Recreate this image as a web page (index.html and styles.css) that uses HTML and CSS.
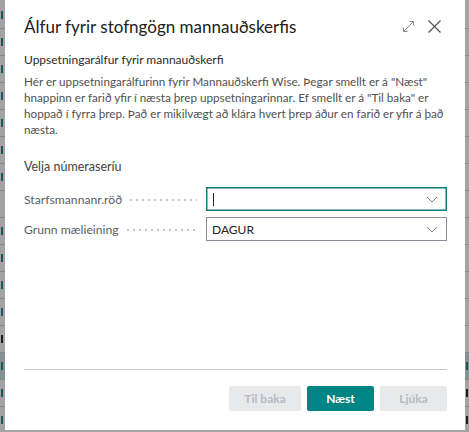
FILE: index.html
```html
<!DOCTYPE html>
<html lang="is">
<head>
    <meta charset="UTF-8">
    <title>Álfur fyrir stofngögn mannauðskerfis</title>
    <link rel="stylesheet" href="styles.css">
</head>
<body>
<div class="page">
    <!-- brot af listanum fyrir aftan gluggann -->
    <ul class="strip left">
        <li><i></i></li>
        <li><i></i></li>
        <li><i></i></li>
        <li><i></i></li>
        <li><i></i></li>
        <li><i></i></li>
        <li><i></i></li>
        <li></li>
        <li><i></i></li>
        <li><i></i></li>
        <li><i></i></li>
        <li><i></i></li>
        <li class="dark"><i></i></li>
        <li class="sel"><i></i></li>
        <li><i></i></li>
        <li><i></i></li>
    </ul>
    <ul class="strip right">
        <li></li>
        <li></li>
        <li></li>
        <li></li>
        <li></li>
        <li></li>
        <li></li>
        <li></li>
        <li></li>
        <li></li>
        <li></li>
        <li></li>
        <li></li>
        <li class="sel"><i></i></li>
        <li class="dark"><i></i></li>
        <li class="dark"><i></i></li>
    </ul>
</div>
<div class="backdrop"></div>

<div class="dialog">
    <div class="head">
        <h1>Álfur fyrir stofngögn mannauðskerfis</h1>
        <div class="tools">
            <!-- stækka -->
            <svg width="13" height="13" viewBox="0 0 13 13" fill="none" stroke="#8c8c8c" stroke-width="1">
                <path d="M1.5 11.5 L11.5 1.5"/>
                <path d="M1.5 7.5 L1.5 11.5 L5.5 11.5"/>
                <path d="M7.5 1.5 L11.5 1.5 L11.5 5.5"/>
            </svg>
            <!-- loka -->
            <svg width="15" height="15" viewBox="0 0 15 15" fill="none" stroke="#555" stroke-width="1.2">
                <path d="M1.5 1.5 L13.5 13.5"/>
                <path d="M13.5 1.5 L1.5 13.5"/>
            </svg>
        </div>
    </div>

    <div class="body">
        <h2>Uppsetningarálfur fyrir mannauðskerfi</h2>
        <p class="intro">Hér er uppsetningarálfurinn fyrir Mannauðskerfi Wise. Þegar smellt er á "Næst" hnappinn er farið yfir í næsta þrep uppsetningarinnar. Ef smellt er á "Til baka" er hoppað í fyrra þrep. Það er mikilvægt að klára hvert þrep áður en farið er yfir á það næsta.</p>

        <div class="group">Velja númeraseríu</div>

        <div class="field">
            <label>Starfsmannanr.röð</label>
            <span class="dots"></span>
            <div class="select focus">
                <span class="caret"></span>
                <svg class="chev" width="12" height="7" viewBox="0 0 12 7" fill="none" stroke="#808080" stroke-width="1"><path d="M1 1 L6 6 L11 1"/></svg>
            </div>
        </div>
        <div class="field">
            <label>Grunn mælieining</label>
            <span class="dots"></span>
            <div class="select">
                <span class="val">DAGUR</span>
                <svg class="chev" width="12" height="7" viewBox="0 0 12 7" fill="none" stroke="#808080" stroke-width="1"><path d="M1 1 L6 6 L11 1"/></svg>
            </div>
        </div>
    </div>

    <div class="foot">
        <button class="btn" disabled>Til baka</button>
        <button class="btn primary">Næst</button>
        <button class="btn short" disabled>Ljúka</button>
    </div>
</div>
</body>
</html>
```

FILE: styles.css
```css
* {
    margin: 0;
    padding: 0;
    box-sizing: border-box;
}

body {
    width: 469px;
    height: 432px;
    overflow: hidden;
    font-family: "Lato", "Open Sans", sans-serif;
    background: #fff;
}

ul {
    list-style: none;
}

/* síðan fyrir aftan gluggann */
.page {
    height: 432px;
    display: flex;
    justify-content: space-between;
}

.strip {
    padding-top: 2px;
    overflow: hidden;
}

.strip.left {
    width: 5px;
}

.strip.right {
    width: 4px;
}

.strip li {
    height: 27px;
    border-bottom: 1px solid #d4d4d4;
    display: flex;
    align-items: center;
}

.strip li i {
    display: block;
    width: 2px;
    height: 8px;
    margin-left: 1px;
    background: #2d8a87;
}

.strip li.dark i {
    background: #333;
}

.strip li.sel {
    background: #cfe6e5;
}

.backdrop {
    position: absolute;
    inset: 0;
    background: rgba(0, 0, 0, 0.36);
}

/* glugginn */
.dialog {
    position: absolute;
    left: 5px;
    top: 0;
    width: 460px;
    height: 430px;
    background: #fff;
    padding: 0 18px 0 19px;
    display: flex;
    flex-direction: column;
}

.head {
    display: flex;
    align-items: center;
    justify-content: space-between;
    height: 52px;
    padding-top: 1px;
}

.head h1 {
    font-size: 17px;
    font-weight: 400;
    color: #212121;
}

.tools {
    display: flex;
    align-items: center;
    gap: 12px;
    margin-right: 5px;
}

.body {
    flex: 1;
}

.body h2 {
    font-size: 12px;
    font-weight: 400;
    color: #2b2b2b;
    line-height: 16px;
    margin-bottom: 5px;
}

.intro {
    font-size: 11.7px;
    line-height: 16px;
    color: #505050;
}

.group {
    margin-top: 22px;
    font-size: 12.5px;
    line-height: 16px;
    color: #444;
    margin-bottom: 12px;
}

.field {
    display: flex;
    align-items: center;
    height: 24px;
    margin-bottom: 6px;
}

.field label {
    font-size: 12.2px;
    color: #5a5f66;
    white-space: nowrap;
}

.dots {
    flex: 1;
    height: 2px;
    margin: 2px 9px 0 6px;
    background-image: radial-gradient(circle, #c8c8c8 0.8px, transparent 1px);
    background-size: 6px 2px;
    background-repeat: repeat-x;
}

.select {
    width: 241px;
    height: 24px;
    border: 1px solid #8a8f99;
    display: flex;
    align-items: center;
    padding: 0 8px 0 5px;
}

.select.focus {
    border-color: #0f7f7f;
    box-shadow: inset 0 0 0 0.5px #0f7f7f;
}

.caret {
    width: 1px;
    height: 13px;
    background: #222;
    margin-left: 1px;
}

.val {
    font-size: 12px;
    color: #222;
}

.chev {
    margin-left: auto;
}

.foot {
    border-top: 1px solid #c8c8c8;
    height: 61px;
    display: flex;
    justify-content: flex-end;
    align-items: flex-start;
    gap: 6px;
    padding-top: 16px;
}

.btn {
    font-family: inherit;
    font-size: 12px;
    font-weight: 700;
    height: 25px;
    width: 72px;
    border: none;
    border-radius: 2px;
    background: #e8e9eb;
    color: #b7babf;
}

.btn.primary {
    width: 67px;
    background: #008484;
    color: #fff;
}

.btn.short {
    width: 67px;
}
```
